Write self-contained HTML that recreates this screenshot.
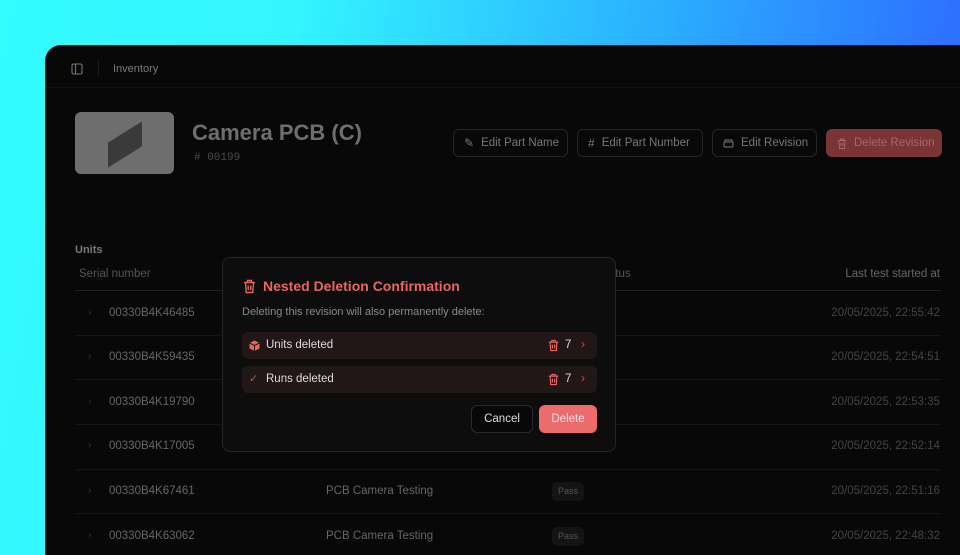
<!DOCTYPE html>
<html><head><meta charset="utf-8"><style>
*{margin:0;padding:0;box-sizing:border-box}
html,body{width:960px;height:555px;overflow:hidden}
body{position:relative;font-family:"Liberation Sans",sans-serif;background:linear-gradient(100deg,#33fbff 0%,#33f5ff 28%,#2ab0ff 62%,#2e5cff 100%)}
.win{position:absolute;left:45px;top:45px;width:940px;height:530px;background:#080808;border-radius:16px;overflow:hidden}
.a{position:absolute;white-space:nowrap}
.btn{position:absolute;top:84px;height:28px;border:1px solid #262626;border-radius:6px;color:#777;font-size:11.5px;display:flex;align-items:center;padding-left:10px;gap:7px}
.row{position:absolute;left:30px;width:866px;height:1px;background:#161616}
.sn{position:absolute;left:64px;font-size:11.5px;color:#666}
.ch{position:absolute;left:43px;font-size:10px;color:#333}
.dt{position:absolute;right:45px;font-size:11.5px;color:#444}
.pass{position:absolute;left:507px;width:32px;height:19px;border-radius:5px;background:#141414;color:#555;font-size:9px;text-align:center;line-height:19px}
.item{position:absolute;left:19px;width:355px;height:27px;background:#211717;border-radius:6px}
</style></head><body>
<div class="win">
 <svg class="a" style="left:26px;top:18px" width="12" height="12" viewBox="0 0 12 12" fill="none" stroke="#777" stroke-width="1.1"><rect x="1" y="1" width="10" height="10" rx="1.5"/><line x1="4.5" y1="1" x2="4.5" y2="11"/></svg>
 <div class="a" style="left:53px;top:15px;width:1px;height:16px;background:#1a1a1a"></div>
 <div class="a" style="left:68px;top:18px;font-size:11px;color:#7a7a7a">Inventory</div>
 <div class="a" style="left:0;top:42px;width:940px;height:1px;background:#121212"></div>
 <div class="a" style="left:30px;top:67px;width:99px;height:62px;border-radius:6px;background:#6e6e6e"></div>
 <div class="a" style="left:63px;top:87px;width:34px;height:25px;background:#3a3a3a;transform:skewY(-32deg)"></div>
 <div class="a" style="left:147px;top:75px;font-size:22px;font-weight:bold;color:#6e6e6e">Camera PCB (C)</div>
 <div class="a" style="left:149px;top:107px;font-size:11px;color:#4a4a4a;font-family:'Liberation Mono',monospace"># 00199</div>
 <div class="btn" style="left:408px;width:115px"><span style="font-size:12px">✎</span>Edit Part Name</div>
 <div class="btn" style="left:532px;width:126px"><span style="font-size:12px">#</span>Edit Part Number</div>
 <div class="btn" style="left:667px;width:105px"><svg width="11" height="10" viewBox="0 0 11 10" fill="none" stroke="#7a7a7a"><rect x="1" y="4" width="9" height="5" rx="1"/><path d="M2 4V2h7v2"/></svg>Edit Revision</div>
 <div class="btn" style="left:781px;width:116px;background:#7a3434;border-color:#7a3434;color:#a66"><svg width="10" height="11" viewBox="0 0 10 11" fill="none" stroke="#a66"><path d="M1 2.5h8M3.5 2.5V1h3v1.5M2 2.5l.5 8h5l.5-8M4 5v3M6 5v3"/></svg>Delete Revision</div>
 <div class="a" style="left:30px;top:199px;font-size:11px;font-weight:bold;color:#7a7a7a">Units</div>
 <div class="a" style="left:34px;top:223px;font-size:11.5px;color:#555">Serial number</div>
 <div class="a" style="left:553px;top:223px;font-size:11.5px;color:#555">Status</div>
 <div class="a" style="right:45px;top:223px;font-size:11.5px;color:#666">Last test started at</div>
 <div class="row" style="top:245px;background:#222"></div>
 <div class="ch" style="top:262px">›</div><div class="sn" style="top:262px">00330B4K46485</div><div class="dt" style="top:262px">20/05/2025, 22:55:42</div>
 <div class="row" style="top:290px"></div>
 <div class="ch" style="top:306px">›</div><div class="sn" style="top:306px">00330B4K59435</div><div class="dt" style="top:306px">20/05/2025, 22:54:51</div>
 <div class="row" style="top:334px"></div>
 <div class="ch" style="top:351px">›</div><div class="sn" style="top:351px">00330B4K19790</div><div class="dt" style="top:351px">20/05/2025, 22:53:35</div>
 <div class="row" style="top:379px"></div>
 <div class="ch" style="top:395px">›</div><div class="sn" style="top:395px">00330B4K17005</div><div class="dt" style="top:395px">20/05/2025, 22:52:14</div>
 <div class="row" style="top:424px"></div>
 <div class="ch" style="top:440px">›</div><div class="sn" style="top:440px">00330B4K67461</div><div class="a" style="left:281px;top:440px;font-size:11.5px;color:#666">PCB Camera Testing</div><div class="pass" style="top:437px">Pass</div><div class="dt" style="top:440px">20/05/2025, 22:51:16</div>
 <div class="row" style="top:468px"></div>
 <div class="ch" style="top:485px">›</div><div class="sn" style="top:485px">00330B4K63062</div><div class="a" style="left:281px;top:485px;font-size:11.5px;color:#666">PCB Camera Testing</div><div class="pass" style="top:482px">Pass</div><div class="dt" style="top:485px">20/05/2025, 22:48:32</div>
</div>
<div class="a" style="left:222px;top:257px;width:394px;height:195px;background:#0d0d0d;border:1px solid #262626;border-radius:8px">
 <svg class="a" style="left:20px;top:21px" width="13" height="15" viewBox="0 0 13 15" fill="none" stroke="#e86562" stroke-width="1.4"><path d="M1 3.5h11M4.5 3.5V1.5h4v2M2.5 3.5l.7 10h6.6l.7-10M5.2 6.5v4.5M7.8 6.5v4.5"/></svg>
 <div class="a" style="left:40px;top:20px;font-size:14px;font-weight:bold;color:#e86562">Nested Deletion Confirmation</div>
 <div class="a" style="left:19px;top:48px;font-size:11px;color:#8a8a8a">Deleting this revision will also permanently delete:</div>
 <div class="item" style="top:74px">
  <svg class="a" style="left:7px;top:8px" width="11" height="11" viewBox="0 0 11 11"><path d="M5.5 0.5L10.5 3v5.5L5.5 11 0.5 8.5V3z" fill="#e86562"/><path d="M0.5 3l5 2.5 5-2.5M5.5 5.5V11" stroke="#211717" stroke-width="1" fill="none"/></svg>
  <div class="a" style="left:24px;top:7px;font-size:11.5px;color:#ddd">Units deleted</div>
  <svg class="a" style="left:306px;top:7px" width="11" height="13" viewBox="0 0 13 15" fill="none" stroke="#e86562" stroke-width="1.4"><path d="M1 3.5h11M4.5 3.5V1.5h4v2M2.5 3.5l.7 10h6.6l.7-10M5.2 6.5v4.5M7.8 6.5v4.5"/></svg>
  <div class="a" style="left:323px;top:7px;font-size:11.5px;color:#ddd">7</div>
  <div class="a" style="left:339px;top:5px;font-size:12px;color:#c05552">›</div>
 </div>
 <div class="item" style="top:108px">
  <div class="a" style="left:7px;top:6px;font-size:11px;color:#c05552">✓</div>
  <div class="a" style="left:24px;top:7px;font-size:11.5px;color:#ddd">Runs deleted</div>
  <svg class="a" style="left:306px;top:7px" width="11" height="13" viewBox="0 0 13 15" fill="none" stroke="#e86562" stroke-width="1.4"><path d="M1 3.5h11M4.5 3.5V1.5h4v2M2.5 3.5l.7 10h6.6l.7-10M5.2 6.5v4.5M7.8 6.5v4.5"/></svg>
  <div class="a" style="left:323px;top:7px;font-size:11.5px;color:#ddd">7</div>
  <div class="a" style="left:339px;top:5px;font-size:12px;color:#c05552">›</div>
 </div>
 <div class="a" style="left:248px;top:147px;width:62px;height:28px;border:1px solid #2a2a2a;border-radius:6px;background:#080808;color:#ddd;font-size:11.5px;text-align:center;line-height:26px">Cancel</div>
 <div class="a" style="left:316px;top:147px;width:58px;height:28px;border-radius:6px;background:#ec6b6b;color:#fde;font-size:11.5px;text-align:center;line-height:28px">Delete</div>
</div>
</body></html>
